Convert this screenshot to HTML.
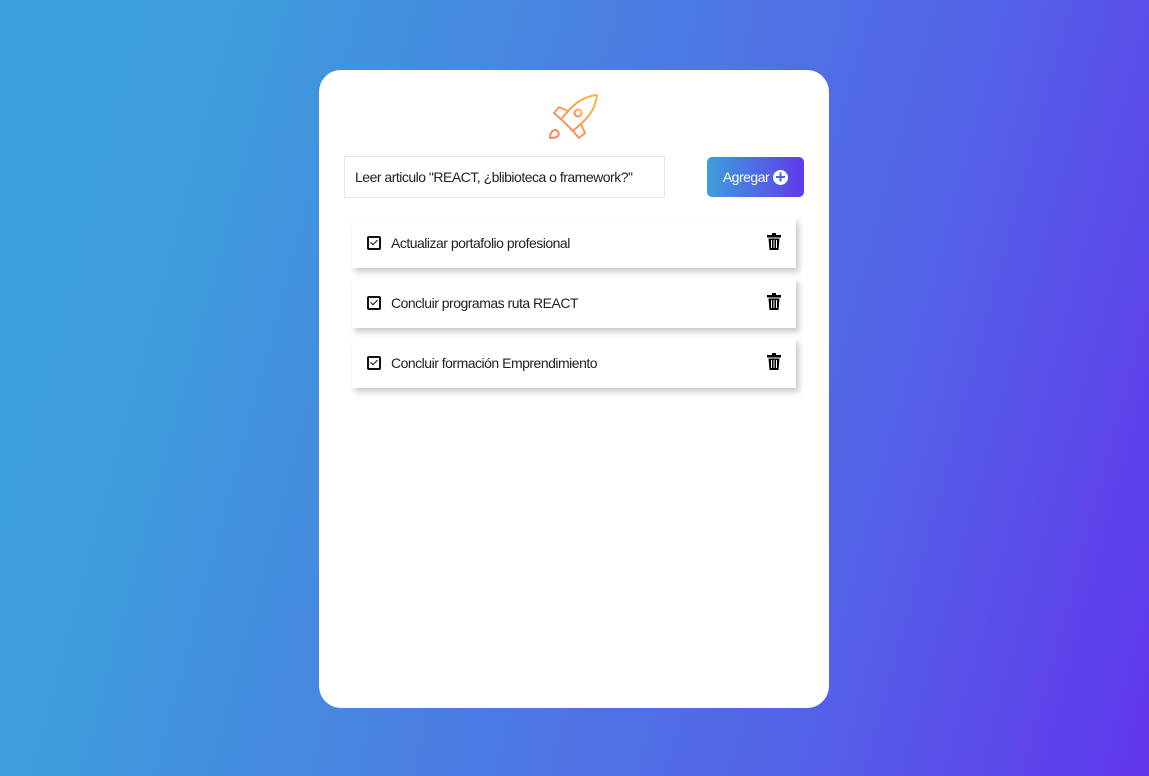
<!DOCTYPE html>
<html><head><meta charset="utf-8"><style>
*{box-sizing:border-box;margin:0;padding:0}
body{width:1149px;height:776px;overflow:hidden;background:linear-gradient(105deg,#3ba0db 0%,#3f9adc 20%,#4a80e2 45%,#5560e8 75%,#6035ec 100%);font-family:"Liberation Sans",sans-serif;position:relative}
.card{position:absolute;left:319px;top:70px;width:510px;height:638px;background:#fff;border-radius:22px}
.input{position:absolute;left:25px;top:86px;width:321px;height:42px;border:1px solid #e6e6e6;font-size:14px;letter-spacing:-0.5px;color:#222;padding:12px 10px}
.btn{position:absolute;left:388px;top:87px;width:97px;height:40px;border-radius:5px;background:linear-gradient(90deg,#3d9fdb,#5f3aec);color:#fff;font-size:14px;letter-spacing:-0.5px;display:flex;align-items:center;justify-content:center;gap:4px}
.plus{width:15px;height:15px;border-radius:50%;background:#fff;position:relative}
.plus:before,.plus:after{content:"";position:absolute;background:#5060e6;left:3px;top:6.5px;width:9px;height:2px}
.plus:after{transform:rotate(90deg)}
.item{position:absolute;left:33px;width:444px;height:50px;background:#fff;box-shadow:3px 4px 6px rgba(0,0,0,.22);display:flex;align-items:center;font-size:14px;letter-spacing:-0.5px;color:#222}
.cb{width:14px;height:14px;border:2px solid #111;border-radius:2px;margin:0 10px 0 15px;position:relative}
.cb:after{content:"";position:absolute;left:3px;top:0px;width:3px;height:6px;border:solid #111;border-width:0 1.5px 1.5px 0;transform:rotate(45deg)}
.trash{position:absolute;right:15px;top:15px}
</style></head><body>
<div class="card">
<svg style="position:absolute;left:226px;top:20px" width="58" height="54" viewBox="0 0 58 54" fill="none" stroke-width="2" stroke-linejoin="round" stroke-linecap="round">
<defs><linearGradient id="g" x1="0" y1="1" x2="1" y2="0"><stop offset="0" stop-color="#f7836f"/><stop offset="1" stop-color="#fcb83a"/></linearGradient></defs>
<path stroke="url(#g)" d="M52,5 C42,6 33,11 26,18 L16,29 L28,41 L39,31 C46,24 51,15 52,5 Z M23,21 L14,17 L9,23 L17,30 M36,34 L40,43 L34,48 L27,40 M9,40 C5,42 5,46 5,48 C7,48 11,48 13,46 C15,43 12,39 9,40 Z"/>
<circle cx="33" cy="23" r="3.5" stroke="url(#g)"/>
</svg>
<div class="input">Leer articulo "REACT, ¿blibioteca o framework?"</div>
<div class="btn">Agregar <span class="plus"></span></div>
<div class="item" style="top:148px"><span class="cb"></span>Actualizar portafolio profesional<svg class="trash" width="14" height="17" viewBox="0 0 14 17"><rect x="0" y="2" width="14" height="2.5"/><rect x="5" y="0" width="4" height="3"/><path d="M1.5 5.5h11l-1 11.5h-9z"/><path d="M4.5 7v8M7 7v8M9.5 7v8" stroke="#fff" stroke-width="1"/></svg></div>
<div class="item" style="top:208px"><span class="cb"></span>Concluir programas ruta REACT<svg class="trash" width="14" height="17" viewBox="0 0 14 17"><rect x="0" y="2" width="14" height="2.5"/><rect x="5" y="0" width="4" height="3"/><path d="M1.5 5.5h11l-1 11.5h-9z"/><path d="M4.5 7v8M7 7v8M9.5 7v8" stroke="#fff" stroke-width="1"/></svg></div>
<div class="item" style="top:268px"><span class="cb"></span>Concluir formación Emprendimiento<svg class="trash" width="14" height="17" viewBox="0 0 14 17"><rect x="0" y="2" width="14" height="2.5"/><rect x="5" y="0" width="4" height="3"/><path d="M1.5 5.5h11l-1 11.5h-9z"/><path d="M4.5 7v8M7 7v8M9.5 7v8" stroke="#fff" stroke-width="1"/></svg></div>
</div>
</body></html>
